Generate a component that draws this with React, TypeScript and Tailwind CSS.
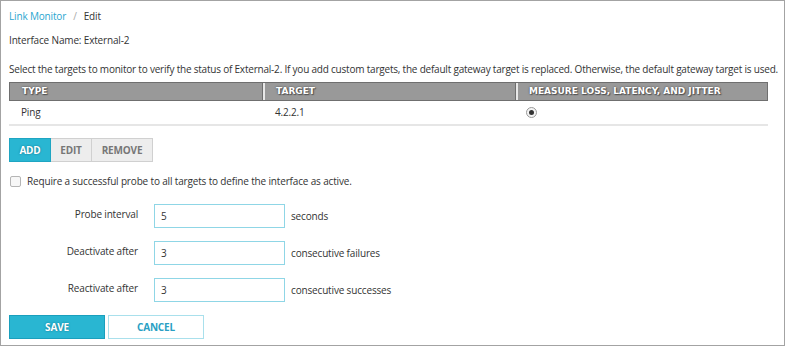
export default function App() {
  const font = { fontFamily: '"Open Sans", "Liberation Sans", sans-serif' };
  const rows = [
    { label: "Probe interval", value: "5", unit: "seconds" },
    { label: "Deactivate after", value: "3", unit: "consecutive failures" },
    { label: "Reactivate after", value: "3", unit: "consecutive successes" },
  ];

  return (
    <div
      className="w-[785px] h-[346px] bg-white border border-[#a3a3a3] overflow-hidden text-[10px] tracking-[-0.16px] text-[#333]"
      style={font}
    >
      <div className="pl-[8px] pt-[7px] w-[767px]">
        {/* Breadcrumb */}
        <div className="h-[16px] leading-[16px] flex items-center gap-[7px]">
          <span className="text-[#2aa6d0]">Link Monitor</span>
          <span className="text-[#aaa]">/</span>
          <span className="text-[#333]">Edit</span>
        </div>

        <div className="mt-[8px] h-[16px] leading-[16px]">Interface Name: External-2</div>

        <div className="mt-[13px] h-[16px] leading-[16px] whitespace-nowrap tracking-[-0.21px]">
          Select the targets to monitor to verify the status of External-2. If you add custom targets, the
          default gateway target is replaced. Otherwise, the default gateway target is used.
        </div>

        {/* Table */}
        <div className="mt-[5px] w-[759px]">
          <div
            className="flex h-[19px] bg-[#999] border border-[#6f6f6f] text-white font-bold text-[9px] tracking-normal"
            style={{ fontFamily: '"DejaVu Sans", Verdana, sans-serif', textShadow: "0 0 2px #444, 1px 1px 1px #555" }}
          >
            <div className="w-[253px] pl-[12px] flex items-center border-r border-[#6f6f6f]">TYPE</div>
            <div className="w-[253px] pl-[11px] flex items-center border-l-2 border-r border-l-[#e8e8e8] border-r-[#6f6f6f]">
              TARGET
            </div>
            <div className="flex-1 pl-[11px] flex items-center border-l-2 border-[#e8e8e8]">
              MEASURE LOSS, LATENCY, AND JITTER
            </div>
          </div>
          <div className="flex h-[25px] items-center border-b-2 border-[#e6e6e6]">
            <div className="w-[265px] pl-[12px]">Ping</div>
            <div className="w-[252px] pl-[1px]">4.2.2.1</div>
            <div className="flex-1">
              <span className="flex items-center justify-center w-[11px] h-[11px] rounded-full border border-[#9a9a9a] bg-[#f4f4f4]">
                <span className="w-[5px] h-[5px] rounded-full bg-[#333]" />
              </span>
            </div>
          </div>
        </div>

        {/* Add / Edit / Remove */}
        <div className="mt-[12px] flex h-[24px] font-bold">
          <div
            className="w-[42px] flex items-center justify-center bg-[#29b6d2] border border-[#1fa5c2] text-white"
            style={{ textShadow: "0 0 2px #0e6f85" }}
          >
            ADD
          </div>
          <div className="w-[41px] flex items-center justify-center bg-[#ededed] border border-l-0 border-[#d0d0d0] text-[#777]">
            EDIT
          </div>
          <div className="w-[61px] flex items-center justify-center bg-[#ededed] border border-l-0 border-[#d0d0d0] text-[#777]">
            REMOVE
          </div>
        </div>

        {/* Checkbox */}
        <div className="mt-[11px] h-[16px] flex items-center gap-[6px]">
          <span className="w-[11px] h-[11px] rounded-[2px] border border-[#b5b5b5] bg-[#f7f7f7] ml-[1px]" />
          <span>Require a successful probe to all targets to define the interface as active.</span>
        </div>

        {/* Form */}
        <div className="mt-[15px] flex flex-col gap-[13px]">
          {rows.map((r) => (
            <div key={r.label} className="flex items-center h-[24px]">
              <div className="w-[129px] text-right pb-[3px]">{r.label}</div>
              <div className="ml-[16px] w-[131px] h-[24px] border border-[#8fd6e6] flex items-center pl-[6px] text-[#333]">
                {r.value}
              </div>
              <div className="ml-[6px]">{r.unit}</div>
            </div>
          ))}
        </div>

        {/* Save / Cancel */}
        <div className="mt-[13px] flex gap-[3px] h-[24px] font-bold">
          <div
            className="w-[96px] flex items-center justify-center bg-[#29b6d2] border border-[#1a9fbd] text-white"
            style={{ textShadow: "0 0 2px #0e6f85" }}
          >
            SAVE
          </div>
          <div className="w-[96px] flex items-center justify-center bg-white border border-[#a9e0ec] text-[#2a9fc4]">
            CANCEL
          </div>
        </div>
      </div>
    </div>
  );
}
